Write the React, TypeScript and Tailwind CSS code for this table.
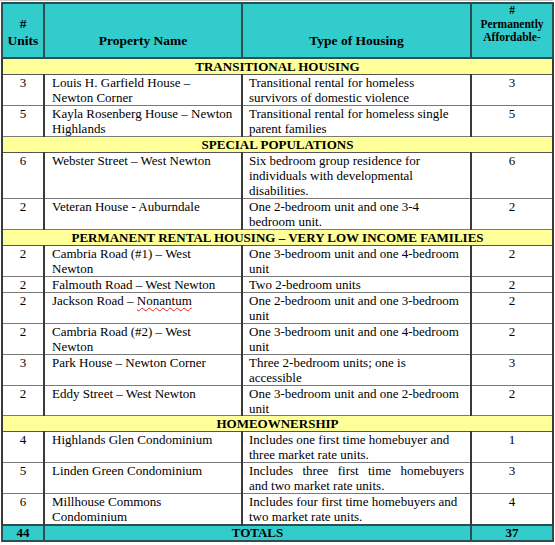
import React from "react";

type Row = {
  u: string;
  name: string[];
  type: string[];
  p: string;
  justify?: boolean;
  clip?: boolean;
  wavy?: string;
};

type Section = { title: string; rows: Row[] };

const sections: Section[] = [
  {
    title: "TRANSITIONAL HOUSING",
    rows: [
      { u: "3", name: ["Louis H. Garfield House –", "Newton Corner"], type: ["Transitional rental for homeless", "survivors of domestic violence"], p: "3" },
      { u: "5", name: ["Kayla Rosenberg House – Newton", "Highlands"], type: ["Transitional rental for homeless single", "parent families"], p: "5" },
    ],
  },
  {
    title: "SPECIAL POPULATIONS",
    rows: [
      { u: "6", name: ["Webster Street – West Newton"], type: ["Six bedroom group residence for", "individuals with developmental", "disabilities."], p: "6" },
      { u: "2", name: ["Veteran House - Auburndale"], type: ["One 2-bedroom unit and one 3-4", "bedroom unit."], p: "2" },
    ],
  },
  {
    title: "PERMANENT RENTAL HOUSING – VERY LOW INCOME FAMILIES",
    rows: [
      { u: "2", name: ["Cambria Road (#1) – West", "Newton"], type: ["One 3-bedroom unit and one 4-bedroom", "unit"], p: "2" },
      { u: "2", name: ["Falmouth Road – West Newton"], type: ["Two 2-bedroom units"], p: "2" },
      { u: "2", name: ["Jackson Road – "], wavy: "Nonantum", type: ["One 2-bedroom unit and one 3-bedroom", "unit"], p: "2" },
      { u: "2", name: ["Cambria Road (#2) – West", "Newton"], type: ["One 3-bedroom unit and one 4-bedroom", "unit"], p: "2" },
      { u: "3", name: ["Park House – Newton Corner"], type: ["Three 2-bedroom units; one is", "accessible"], p: "3" },
      { u: "2", name: ["Eddy Street – West Newton"], type: ["One 3-bedroom unit and one 2-bedroom", "unit"], p: "2", clip: true },
    ],
  },
  {
    title: "HOMEOWNERSHIP",
    rows: [
      { u: "4", name: ["Highlands Glen Condominium"], type: ["Includes one first time homebuyer and", "three market rate units."], p: "1" },
      { u: "5", name: ["Linden Green Condominium"], type: ["Includes three first time homebuyers", "and two market rate units."], p: "3", justify: true },
      { u: "6", name: ["Millhouse Commons", "Condominium"], type: ["Includes four first time homebuyers and", "two market rate units."], p: "4" },
    ],
  },
];

const cell =
  "border-x-2 border-x-[#3a3a3a] border-y border-y-[#7a7a7a] align-top p-0 leading-[15px] text-black";

function Lines({ lines, justify, clip }: { lines: string[]; justify?: boolean; clip?: boolean }) {
  return (
    <div className={clip ? "h-[29px] overflow-hidden" : ""}>
      {lines.map((l, i) => (
        <div
          key={i}
          className={
            justify && i === 0
              ? "text-justify [text-align-last:justify] whitespace-nowrap"
              : "whitespace-nowrap"
          }
        >
          {l}
        </div>
      ))}
    </div>
  );
}

export default function App() {
  return (
    <div
      className="w-[555px] h-[545px] bg-white text-black overflow-hidden"
      style={{ fontFamily: '"Liberation Serif", "Times New Roman", serif' }}
    >
      <div className="h-px bg-[#c8c8c8] w-[553px]" />
      <table className="table-fixed border-collapse w-[551px] ml-px mt-[1px] text-[13px]">
        <colgroup>
          <col className="w-[42px]" />
          <col className="w-[198px]" />
          <col className="w-[229px]" />
          <col className="w-[82px]" />
        </colgroup>
        <thead>
          <tr className="bg-[#33cccc] h-[55px] font-bold">
            <th className="border-2 border-[#2f4f4f] align-bottom pb-[8px] leading-[17px] font-bold text-[13.5px]">
              #<br />Units
            </th>
            <th className="border-2 border-[#2f4f4f] align-bottom pb-[8px] leading-[17px] font-bold text-[13.5px]">
              Property Name
            </th>
            <th className="border-2 border-[#2f4f4f] align-bottom pb-[8px] leading-[17px] font-bold text-[13.5px]">
              Type of Housing
            </th>
            <th className="border-2 border-[#2f4f4f] align-top pt-0 leading-[13.5px] text-[11.5px] font-bold">
              #<br />Permanently<br />Affordable-
            </th>
          </tr>
        </thead>
        <tbody>
          {sections.map((s) => (
            <React.Fragment key={s.title}>
              <tr className="bg-[#ffff99]">
                <td
                  colSpan={4}
                  className="border-x-2 border-x-[#3a3a3a] border-y border-y-[#555] text-center font-bold leading-[15px] p-0 text-[13px]"
                >
                  {s.title}
                </td>
              </tr>
              {s.rows.map((r, i) => (
                <tr key={i}>
                  <td className={`${cell} text-center`}>{r.u}</td>
                  <td className={`${cell} pl-[7px]`}>
                    {r.wavy ? (
                      <div className="whitespace-nowrap">
                        {r.name[0]}
                        <span className="underline decoration-wavy decoration-[#e02020] decoration-1 underline-offset-2">
                          {r.wavy}
                        </span>
                      </div>
                    ) : (
                      <Lines lines={r.name} clip={r.clip} />
                    )}
                  </td>
                  <td className={`${cell} pl-[6px] pr-[6px]`}>
                    <Lines lines={r.type} justify={r.justify} clip={r.clip} />
                  </td>
                  <td className={`${cell} text-center`}>{r.p}</td>
                </tr>
              ))}
            </React.Fragment>
          ))}
          <tr className="bg-[#33cccc] font-bold">
            <td className="border-2 border-[#2f4f4f] text-center leading-[14px] p-0">44</td>
            <td colSpan={2} className="border-2 border-[#2f4f4f] text-center leading-[14px] p-0">
              TOTALS
            </td>
            <td className="border-2 border-[#2f4f4f] text-center leading-[14px] p-0">37</td>
          </tr>
        </tbody>
      </table>
    </div>
  );
}
